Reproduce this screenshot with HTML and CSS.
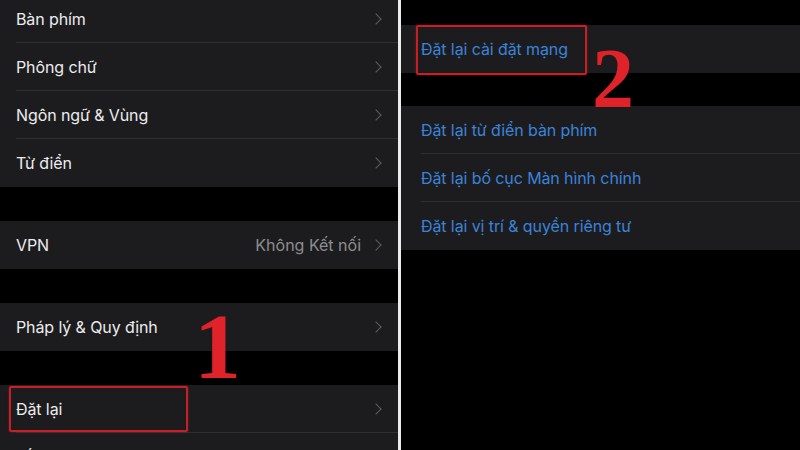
FILE: index.html
```html
<!DOCTYPE html>
<html lang="vi">
<head>
  <meta charset="UTF-8">
  <title>Đặt lại</title>
  <link rel="stylesheet" href="styles.css">
</head>
<body>
<div class="screen">
  <!--cột trái: Cài đặt chung-->
  <div class="panel left">
    <ul class="group first">
      <li class="row"><span class="label">Bàn phím</span><i class="chev"></i></li>
      <li class="row"><span class="label">Phông chữ</span><i class="chev"></i></li>
      <li class="row"><span class="label">Ngôn ngữ &amp; Vùng</span><i class="chev"></i></li>
      <li class="row"><span class="label">Từ điển</span><i class="chev"></i></li>
    </ul>
    <ul class="group">
      <li class="row"><span class="label">VPN</span><span class="value">Không Kết nối</span><i class="chev"></i></li>
    </ul>
    <ul class="group">
      <li class="row"><span class="label">Pháp lý &amp; Quy định</span><i class="chev"></i></li>
    </ul>
    <ul class="group">
      <li class="row mark-row">
        <span class="label">Đặt lại</span><i class="chev"></i>
        <b class="mark mark-1"></b>
        <b class="step step-1">1</b>
      </li>
      <li class="row"><span class="label">Tắt máy</span></li>
    </ul>
  </div>

  <div class="divider"></div>

  <!--cột phải: Đặt lại-->
  <div class="panel right">
    <ul class="group">
      <li class="row mark-row">
        <span class="label link">Đặt lại cài đặt mạng</span>
        <b class="mark mark-2"></b>
        <b class="step step-2">2</b>
      </li>
    </ul>
    <ul class="group">
      <li class="row"><span class="label link">Đặt lại từ điển bàn phím</span></li>
      <li class="row"><span class="label link">Đặt lại bố cục Màn hình chính</span></li>
      <li class="row"><span class="label link">Đặt lại vị trí &amp; quyền riêng tư</span></li>
    </ul>
  </div>
</div>
</body>
</html>
```

FILE: styles.css
```css
* {
  margin: 0;
  padding: 0;
  box-sizing: border-box;
}

ul {
  list-style: none
}

body {
  background: #000;
  font-family: Inter, "Noto Sans", sans-serif;
  overflow: hidden;
}

.screen {
  width: 800px;
  height: 450px;
  display: flex;
  overflow: hidden;
}

.panel {
  display: flex;
  flex-direction: column;
  gap: 34px;
  background: #000;
}

.left {
  width: 398px;
  margin-top: -5px;
}

.right {
  flex: 1;
  padding-top: 25px;
  gap: 33px;
}

.divider {
  width: 3px;
  background: #ececec;
}

.group {
  background: #1c1c1e;
}

.row {
  position: relative;
  height: 48px;
  margin-left: 16px;
  padding-right: 16px;
  display: flex;
  align-items: center;
  border-bottom: 1px solid #2f2f32;
  font-size: 16px;
  color: #ececee;
}

.row:last-child {
  border-bottom: none;
}

.right .row {
  margin-left: 20px;
}

.label {
  flex: 1;
  letter-spacing: -0.1px;
}

.link {
  color: #3b83da;
}

.value {
  color: #8d8d92;
  margin-right: 11px;
}

/* mũi tên > */
.chev {
  width: 8px;
  height: 8px;
  border-top: 1.6px solid #5c5c60;
  border-right: 1.6px solid #5c5c60;
  transform: rotate(45deg);
  margin-right: 2px;
}

/* khung đỏ đánh dấu */
.mark {
  position: absolute;
  border: 2px solid #c81f27;
  border-radius: 2px;
  box-shadow: 0 0 2px rgba(200, 31, 39, .6);
}

.mark-1 {
  left: -7px;
  top: 1px;
  width: 179px;
  height: 46px;
}

.mark-2 {
  left: -5px;
  top: 0;
  width: 171px;
  height: 50px;
}

.step {
  position: absolute;
  font-family: "Liberation Serif", serif;
  font-weight: bold;
  color: #e0232b;
  line-height: 1;
}

.step-1 {
  left: 178px;
  top: -86px;
  font-size: 94px;
}

.step-2 {
  left: 171px;
  top: 12px;
  font-size: 84px;
}
```
